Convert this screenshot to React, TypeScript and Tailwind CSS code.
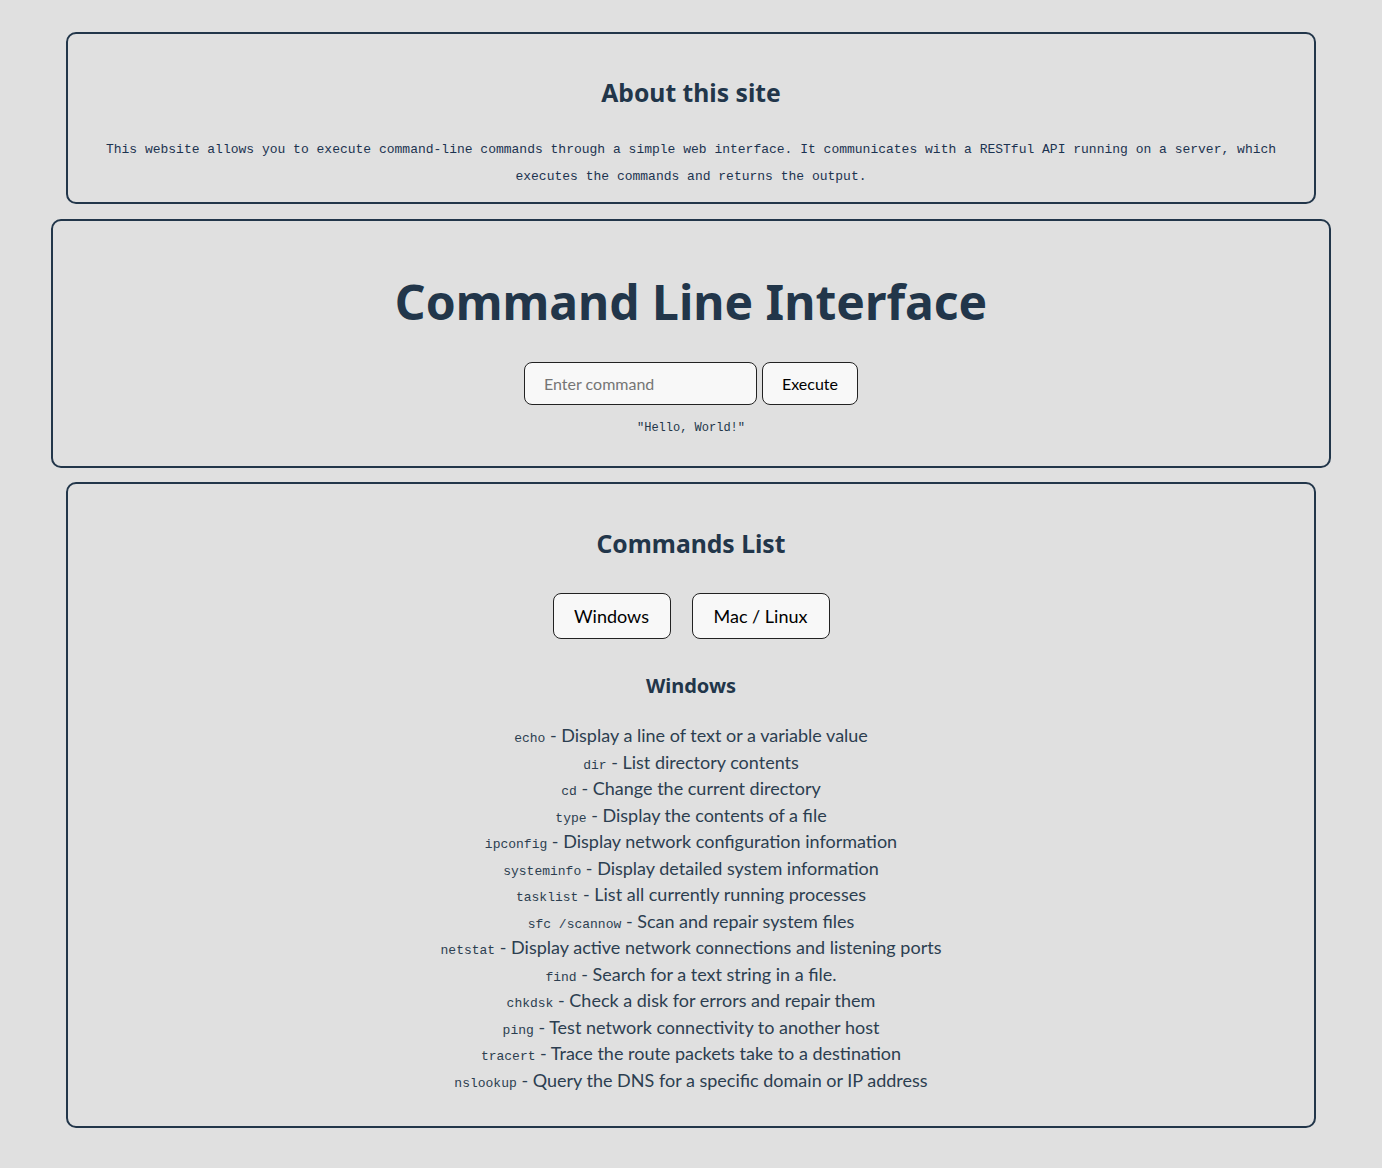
import React, { useState } from 'react'

const windowsCommands: [string, string][] = [
  ['echo', 'Display a line of text or a variable value'],
  ['dir', 'List directory contents'],
  ['cd', 'Change the current directory'],
  ['type', 'Display the contents of a file'],
  ['ipconfig', 'Display network configuration information'],
  ['systeminfo', 'Display detailed system information'],
  ['tasklist', 'List all currently running processes'],
  ['sfc /scannow', 'Scan and repair system files'],
  ['netstat', 'Display active network connections and listening ports'],
  ['find', 'Search for a text string in a file.'],
  ['chkdsk', 'Check a disk for errors and repair them'],
  ['ping', 'Test network connectivity to another host'],
  ['tracert', 'Trace the route packets take to a destination'],
  ['nslookup', 'Query the DNS for a specific domain or IP address'],
]

const unixCommands: [string, string][] = [
  ['echo', 'Display a line of text'],
  ['ls', 'List directory contents'],
  ['cd', 'Change the current directory'],
  ['cat', 'Display the contents of a file'],
  ['pwd', 'Print the working directory'],
]

const sans = "font-['Lato','Noto_Sans',sans-serif]"
const heading = "font-['Noto_Sans','Open_Sans',sans-serif]"
const mono = "font-['Liberation_Mono','DejaVu_Sans_Mono',monospace]"

export default function App() {
  const [os, setOs] = useState<'windows' | 'unix'>('windows')
  const [command, setCommand] = useState('')

  const list = os === 'windows' ? windowsCommands : unixCommands

  return (
    <div className={`min-h-screen bg-[#e0e0e0] pt-8 pb-10 text-[#22364a] ${sans}`}>
      {/* About */}
      <section className="mx-auto w-[1250px] rounded-[10px] border-2 border-[#22364a] px-6 pt-[43px] pb-[12px] text-center">
        <h2 className={`text-[24.7px] leading-[32px] font-bold ${heading}`}>About this site</h2>
        <p className={`mt-[27px] text-[13px] leading-[27px] text-[#1c3350] ${mono}`}>
          This website allows you to execute command-line commands through a simple web interface. It communicates with a
          RESTful API running on a server, which executes the commands and returns the output.
        </p>
      </section>

      {/* CLI */}
      <section className="mx-auto mt-[15px] w-[1280px] rounded-[10px] border-2 border-[#22364a] pt-[51px] pb-[30px] text-center">
        <h1 className={`text-[48px] leading-[60px] font-bold ${heading}`}>Command Line Interface</h1>
        <div className="mt-[30px] flex justify-center gap-[5px]">
          <input
            value={command}
            onChange={(e) => setCommand(e.target.value)}
            placeholder="Enter command"
            className="h-[43px] w-[233px] rounded-[8px] border border-[#222] bg-[#f8f8f8] px-[19px] text-[16px] text-black placeholder:text-[#757575] outline-none"
          />
          <button className="h-[43px] w-[96px] rounded-[8px] border border-[#222] bg-[#f8f8f8] text-[16px] text-black">
            Execute
          </button>
        </div>
        <p className={`mt-[15px] text-[12px] leading-[16px] ${mono}`}>"Hello, World!"</p>
      </section>

      {/* Commands */}
      <section className="mx-auto mt-[14px] w-[1250px] rounded-[10px] border-2 border-[#22364a] pt-[43px] pb-[33px] text-center">
        <h2 className={`text-[24.7px] leading-[34px] font-bold ${heading}`}>Commands List</h2>
        <div className="mt-[32px] flex justify-center gap-[21px]">
          <button
            onClick={() => setOs('windows')}
            className="h-[46px] w-[118px] rounded-[8px] border border-[#222] bg-[#f8f8f8] text-[18px] text-black"
          >
            Windows
          </button>
          <button
            onClick={() => setOs('unix')}
            className="h-[46px] w-[138px] rounded-[8px] border border-[#222] bg-[#f8f8f8] text-[18px] text-black"
          >
            Mac / Linux
          </button>
        </div>
        <h3 className={`mt-[33px] text-[20px] leading-[28px] font-bold ${heading}`}>
          {os === 'windows' ? 'Windows' : 'Mac / Linux'}
        </h3>
        <ul className="mt-[22px] text-[18px] leading-[26.5px] text-[#2c3e50]">
          {list.map(([cmd, desc]) => (
            <li key={cmd} className="h-[26.5px]">
              <code className={`text-[13px] leading-none ${mono}`}>{cmd}</code> - {desc}
            </li>
          ))}
        </ul>
      </section>
    </div>
  )
}
